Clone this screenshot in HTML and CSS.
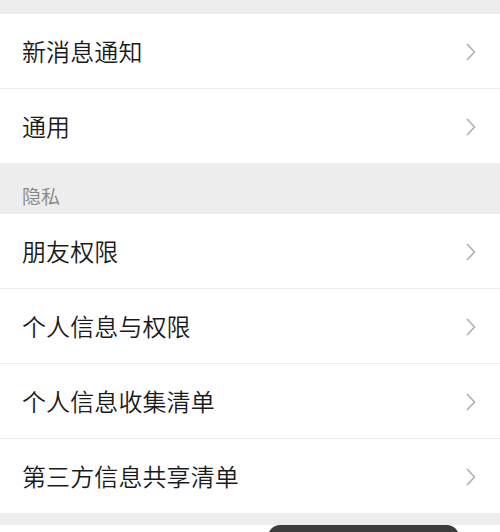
FILE: index.html
```
<!DOCTYPE html>
<html lang="zh-CN">
<head>
<meta charset="utf-8">
<title>设置</title>
<link rel="stylesheet" href="styles.css">
</head>
<body>
<div class="page">
  <div class="gap-top"></div>
  <div class="group">
    <div class="cell"><span class="label">新消息通知</span><svg class="chev" viewBox="0 0 10 18" width="10" height="18"><polyline points="1.5,1.5 8.5,9 1.5,16.5"/></svg></div>
    <div class="cell"><span class="label">通用</span><svg class="chev" viewBox="0 0 10 18" width="10" height="18"><polyline points="1.5,1.5 8.5,9 1.5,16.5"/></svg></div>
  </div>
  <div class="section-title">隐私</div>
  <div class="group">
    <div class="cell"><span class="label">朋友权限</span><svg class="chev" viewBox="0 0 10 18" width="10" height="18"><polyline points="1.5,1.5 8.5,9 1.5,16.5"/></svg></div>
    <div class="cell"><span class="label">个人信息与权限</span><svg class="chev" viewBox="0 0 10 18" width="10" height="18"><polyline points="1.5,1.5 8.5,9 1.5,16.5"/></svg></div>
    <div class="cell"><span class="label">个人信息收集清单</span><svg class="chev" viewBox="0 0 10 18" width="10" height="18"><polyline points="1.5,1.5 8.5,9 1.5,16.5"/></svg></div>
    <div class="cell"><span class="label">第三方信息共享清单</span><svg class="chev" viewBox="0 0 10 18" width="10" height="18"><polyline points="1.5,1.5 8.5,9 1.5,16.5"/></svg></div>
  </div>
  <div class="gap-bottom"></div>
  <div class="group footer"></div>
  <div class="toast"></div>
</div>
</body>
</html>
```
FILE: styles.css
```
html, body {
  margin: 0;
  padding: 0;
  background: #ededed;
}
body {
  font-family: "Noto Sans CJK SC", "Noto Sans", sans-serif;
  width: 500px;
  height: 532px;
  overflow: hidden;
}
.page {
  position: relative;
  display: flex;
  flex-direction: column;
  height: 532px;
  overflow: hidden;
}
.gap-top {
  height: 14px;
  flex: none;
}
.group {
  background: #fff;
  display: flex;
  flex-direction: column;
  flex: none;
}
.cell {
  position: relative;
  height: 74px;
  display: flex;
  align-items: center;
  justify-content: space-between;
  padding: 0 24px 0 22px;
}
.cell + .cell {
  border-top: 1px solid #ececec;
}
.label {
  font-size: 24px;
  font-weight: 350;
  color: #1a1a1a;
  line-height: 1;
  letter-spacing: 0.1px;
}
.chev {
  flex: none;
  display: block;
  margin-top: 2px;
}
.chev polyline {
  fill: none;
  stroke: #b4b4b4;
  stroke-width: 1.8;
  stroke-linecap: round;
  stroke-linejoin: round;
}
.section-title {
  height: 51px;
  box-sizing: border-box;
  padding: 23px 0 0 22px;
  font-size: 19px;
  font-weight: 350;
  line-height: 1;
  color: #858585;
  flex: none;
}
.gap-bottom {
  height: 12px;
  flex: none;
}
.footer {
  flex: 1;
}
.toast {
  position: absolute;
  left: 268px;
  top: 525px;
  width: 191px;
  height: 40px;
  border-radius: 12px;
  background: #3c3c3c;
}
```
